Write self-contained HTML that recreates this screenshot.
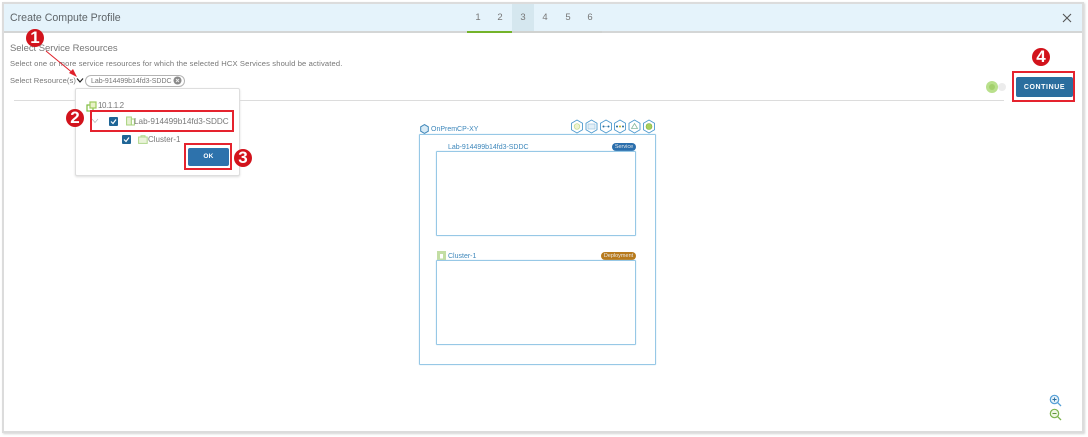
<!DOCTYPE html>
<html><head><meta charset="utf-8"><style>
html,body{margin:0;padding:0;background:#fff}
body{width:1088px;height:437px;position:relative;overflow:hidden;font-family:"Liberation Sans",sans-serif;color:#666}
#w{position:absolute;left:0;top:0;width:1088px;height:437px;filter:blur(.3px)}
.a{position:absolute;box-sizing:border-box}
.t{position:absolute;white-space:nowrap;line-height:1}
.n{position:absolute;top:13px;font-size:9.5px;color:#777;width:10px;text-align:center;line-height:10px}
.red{position:absolute;box-sizing:border-box;border:2px solid #e5232e}
.c{position:absolute;width:18px;height:18px;border-radius:50%;background:#d2131c;color:#fff;font-weight:bold;font-size:17px;line-height:18px;text-align:center}
.cb{position:absolute;width:9px;height:9px;background:#1f6596;border-radius:1px}
.box{position:absolute;box-sizing:border-box;border:1px solid #97c8e6;border-radius:1px;box-shadow:0 0 1px #a8d0ea}
.btn{position:absolute;background:#2d72ac;border-radius:2px;color:#fff;font-weight:bold;text-align:center}
.pill{position:absolute;border-radius:4px;color:#e8e8e8;font-size:5.5px;text-align:center;height:8px;line-height:8px}
</style></head><body><div id="w">
<div class="a" style="left:2px;top:2px;width:1082px;height:431px;border:2px solid #dcdcdc;box-shadow:1px 1px 2px #d4d4d4"></div>
<div class="a" style="left:4px;top:4px;width:1078px;height:29px;background:#e5f3fb;border-bottom:2px solid #d4d6d6"></div>
<div class="t" style="left:10px;top:13px;font-size:10.6px;color:#5e6468">Create Compute Profile</div>

<div class="a" style="left:512px;top:4px;width:22px;height:28px;background:#d5e7ef"></div>
<div class="a" style="left:512px;top:31px;width:90px;height:2px;background:#d0d2d0"></div>
<div class="a" style="left:467px;top:31px;width:45px;height:2px;background:#74b32a"></div>
<div class="n" style="left:473px">1</div><div class="n" style="left:495px">2</div><div class="n" style="left:518px">3</div><div class="n" style="left:540px">4</div><div class="n" style="left:563px">5</div><div class="n" style="left:585px">6</div>
<svg class="a" style="left:1061px;top:12px" width="12" height="12" viewBox="0 0 12 12"><path d="M2 2L10 10M10 2L2 10" stroke="#555" stroke-width="1.1" fill="none"/></svg>

<div class="t" style="left:10px;top:44px;font-size:9.5px;color:#777;letter-spacing:-.05px">Select Service Resources</div>
<div class="t" style="left:10px;top:60px;font-size:7.6px;color:#777;letter-spacing:.13px">Select one or more service resources for which the selected HCX Services should be activated.</div>
<div class="t" style="left:10px;top:77px;font-size:7.6px;color:#777;letter-spacing:.08px">Select Resource(s)</div>
<svg class="a" style="left:76px;top:77px" width="8" height="7" viewBox="0 0 8 7"><path d="M1 1.5L4 5L7 1.5" stroke="#222" stroke-width="1.2" fill="none"/></svg>
<div class="a" style="left:85px;top:75px;width:100px;height:12px;border:1px solid #b4b4b4;border-radius:6px;background:#fff"></div>
<div class="t" style="left:91px;top:78px;font-size:7px;color:#777;letter-spacing:-.02px">Lab-914499b14fd3-SDDC</div>
<svg class="a" style="left:173px;top:76px" width="9" height="9" viewBox="0 0 9 9"><circle cx="4.5" cy="4.5" r="4" fill="#8a8a8a"/><path d="M3 3L6 6M6 3L3 6" stroke="#eee" stroke-width=".9"/></svg>

<div class="a" style="left:14px;top:100px;width:990px;height:1px;background:#dcdcdc"></div>

<div class="a" style="left:986px;top:81px;width:12px;height:12px;border-radius:50%;background:#b9e08c"></div>
<div class="a" style="left:989px;top:84px;width:6px;height:6px;border-radius:50%;background:#a3d06c"></div>
<div class="a" style="left:998px;top:83px;width:8px;height:8px;border-radius:50%;background:#ececec"></div>
<div class="btn" style="left:1016px;top:77px;width:57px;height:20px;background:#2b6e9e;font-size:7px;line-height:21px;letter-spacing:.6px">CONTINUE</div>
<div class="red" style="left:1012px;top:71px;width:63px;height:31px"></div>
<div class="c" style="left:1032px;top:48px">4</div>

<!-- dropdown -->
<div class="a" style="left:75px;top:88px;width:165px;height:88px;background:#fff;border:1px solid #dedede;border-radius:2px;box-shadow:0 1px 2px #ddd"></div>
<svg class="a" style="left:86px;top:101px" width="11" height="11" viewBox="0 0 11 11"><rect x="1" y="4" width="6" height="6" fill="#fff" stroke="#7cbb3c" stroke-width="1.2"/><rect x="4" y="1" width="6" height="6" fill="#e9f2c8" stroke="#9ccb5c" stroke-width="1.2"/></svg>
<div class="t" style="left:98px;top:102px;font-size:8px;color:#777;letter-spacing:-.4px">10.1.1.2</div>
<svg class="a" style="left:91px;top:118px" width="8" height="6" viewBox="0 0 8 6"><path d="M1 1L4 4.5L7 1" stroke="#bbb" stroke-width=".8" fill="none"/></svg>
<div class="cb" style="left:109px;top:117px"><svg width="9" height="9" viewBox="0 0 9 9" style="display:block"><path d="M2 4.5L4 6.5L7 2.5" stroke="#fff" stroke-width="1.2" fill="none"/></svg></div>
<svg class="a" style="left:126px;top:116px" width="9" height="10" viewBox="0 0 9 10"><rect x=".6" y="1" width="4.8" height="8" fill="#e6f1d2" stroke="#a5d27a" stroke-width="1"/><rect x="5.4" y="3" width="3" height="6" fill="#fff" stroke="#a5d27a" stroke-width="1"/></svg>
<div class="t" style="left:134px;top:118px;font-size:8.2px;color:#777">Lab-914499b14fd3-SDDC</div>
<div class="cb" style="left:122px;top:135px"><svg width="9" height="9" viewBox="0 0 9 9" style="display:block"><path d="M2 4.5L4 6.5L7 2.5" stroke="#fff" stroke-width="1.2" fill="none"/></svg></div>
<svg class="a" style="left:138px;top:135px" width="10" height="9" viewBox="0 0 10 9"><rect x=".6" y="2" width="8.6" height="6.4" fill="#eaf3da" stroke="#b1d78c" stroke-width="1"/><path d="M3 2V.8H7V2" stroke="#b1d78c" fill="none"/></svg>
<div class="t" style="left:148px;top:136px;font-size:8px;color:#777">Cluster-1</div>
<div class="red" style="left:90px;top:110px;width:144px;height:22px"></div>
<div class="btn" style="left:188px;top:148px;width:41px;height:18px;font-size:6.5px;line-height:18px;letter-spacing:.3px">OK</div>
<div class="red" style="left:184px;top:143px;width:48px;height:27px"></div>

<!-- annotations -->
<svg class="a" style="left:40px;top:48px" width="42" height="32" viewBox="0 0 42 32"><path d="M6 3L34 26" stroke="#e0202a" stroke-width="1"/><path d="M37 29L29 25L33 21Z" fill="#e0202a"/></svg>
<div class="c" style="left:26px;top:29px">1</div>
<div class="c" style="left:66px;top:109px">2</div>
<div class="c" style="left:234px;top:149px">3</div>

<!-- diagram -->
<svg class="a" style="left:420px;top:124px" width="9" height="10" viewBox="0 0 9 10"><path d="M4.5 .6L8.3 2.8V7.2L4.5 9.4L.7 7.2V2.8Z" fill="#d9ebf6" stroke="#3f86b8" stroke-width="1"/></svg>
<div class="t" style="left:431px;top:126px;font-size:7px;color:#3d87bb">OnPremCP-XY</div>
<svg class="a" style="left:570px;top:119px" width="86" height="15" viewBox="0 0 86 15">
<g fill="#fff" stroke="#4f9bcf" stroke-width=".9">
<path d="M7 1L12.5 4.2V10.8L7 14L1.5 10.8V4.2Z"/><path d="M21.5 1L27 4.2V10.8L21.5 14L16 10.8V4.2Z"/><path d="M36 1L41.5 4.2V10.8L36 14L30.5 10.8V4.2Z"/><path d="M50 1L55.5 4.2V10.8L50 14L44.5 10.8V4.2Z"/><path d="M64.5 1L70 4.2V10.8L64.5 14L59 10.8V4.2Z"/><path d="M79 1L84.5 4.2V10.8L79 14L73.5 10.8V4.2Z"/></g>
<circle cx="7" cy="7.5" r="2.8" fill="#eef3d0" stroke="#c1d88a" stroke-width=".7"/>
<rect x="18" y="5" width="7" height="5" fill="#e2eff7" stroke="#9cc6e2" stroke-width=".7"/>
<circle cx="33.5" cy="7.5" r="1" fill="#2b6e9e"/><circle cx="38.5" cy="7.5" r="1" fill="#2b6e9e"/><path d="M34 7.5H38" stroke="#6aa5cc" stroke-width=".5"/>
<circle cx="47" cy="7.5" r="1" fill="#2b6e9e"/><circle cx="50" cy="7.5" r="1" fill="#c2b92a"/><circle cx="53" cy="7.5" r="1" fill="#2b6e9e"/>
<path d="M64.5 4.5L67.5 9.5H61.5Z" fill="#fff" stroke="#87b9a0" stroke-width=".8"/>
<circle cx="79" cy="7.5" r="3" fill="#a8cf5e" stroke="#7fb13c" stroke-width=".6"/>
</svg>
<div class="box" style="left:419px;top:134px;width:237px;height:231px"></div>
<div class="t" style="left:448px;top:144px;font-size:7px;color:#3d87bb;letter-spacing:-.02px">Lab-914499b14fd3-SDDC</div>
<div class="pill" style="left:612px;top:143px;width:24px;background:#2b6fad">Service</div>
<div class="box" style="left:436px;top:151px;width:200px;height:85px"></div>
<svg class="a" style="left:437px;top:251px" width="9" height="10" viewBox="0 0 9 10"><rect x="1.5" y="1.5" width="6" height="7.5" fill="#fff" stroke="#c3dea4" stroke-width="3"/></svg>
<div class="t" style="left:448px;top:253px;font-size:7px;color:#3d87bb">Cluster-1</div>
<div class="pill" style="left:601px;top:252px;width:35px;background:#b87a1c">Deployment</div>
<div class="box" style="left:436px;top:260px;width:200px;height:85px"></div>

<svg class="a" style="left:1049px;top:394px" width="13" height="13" viewBox="0 0 13 13"><circle cx="5.5" cy="5.5" r="4.2" fill="#e3f0f9" stroke="#559fd6" stroke-width="1.2"/><path d="M8.6 8.6L12 12" stroke="#559fd6" stroke-width="1.3"/><path d="M3.5 5.5H7.5M5.5 3.5V7.5" stroke="#2b6e9e" stroke-width=".9"/></svg>
<svg class="a" style="left:1049px;top:408px" width="13" height="13" viewBox="0 0 13 13"><circle cx="5.5" cy="5.5" r="4.2" fill="#eff6e4" stroke="#7db44e" stroke-width="1.2"/><path d="M8.6 8.6L12 12" stroke="#7db44e" stroke-width="1.3"/><path d="M3.5 5.5H7.5" stroke="#4f8a2a" stroke-width=".9"/></svg>
</div></body></html>
